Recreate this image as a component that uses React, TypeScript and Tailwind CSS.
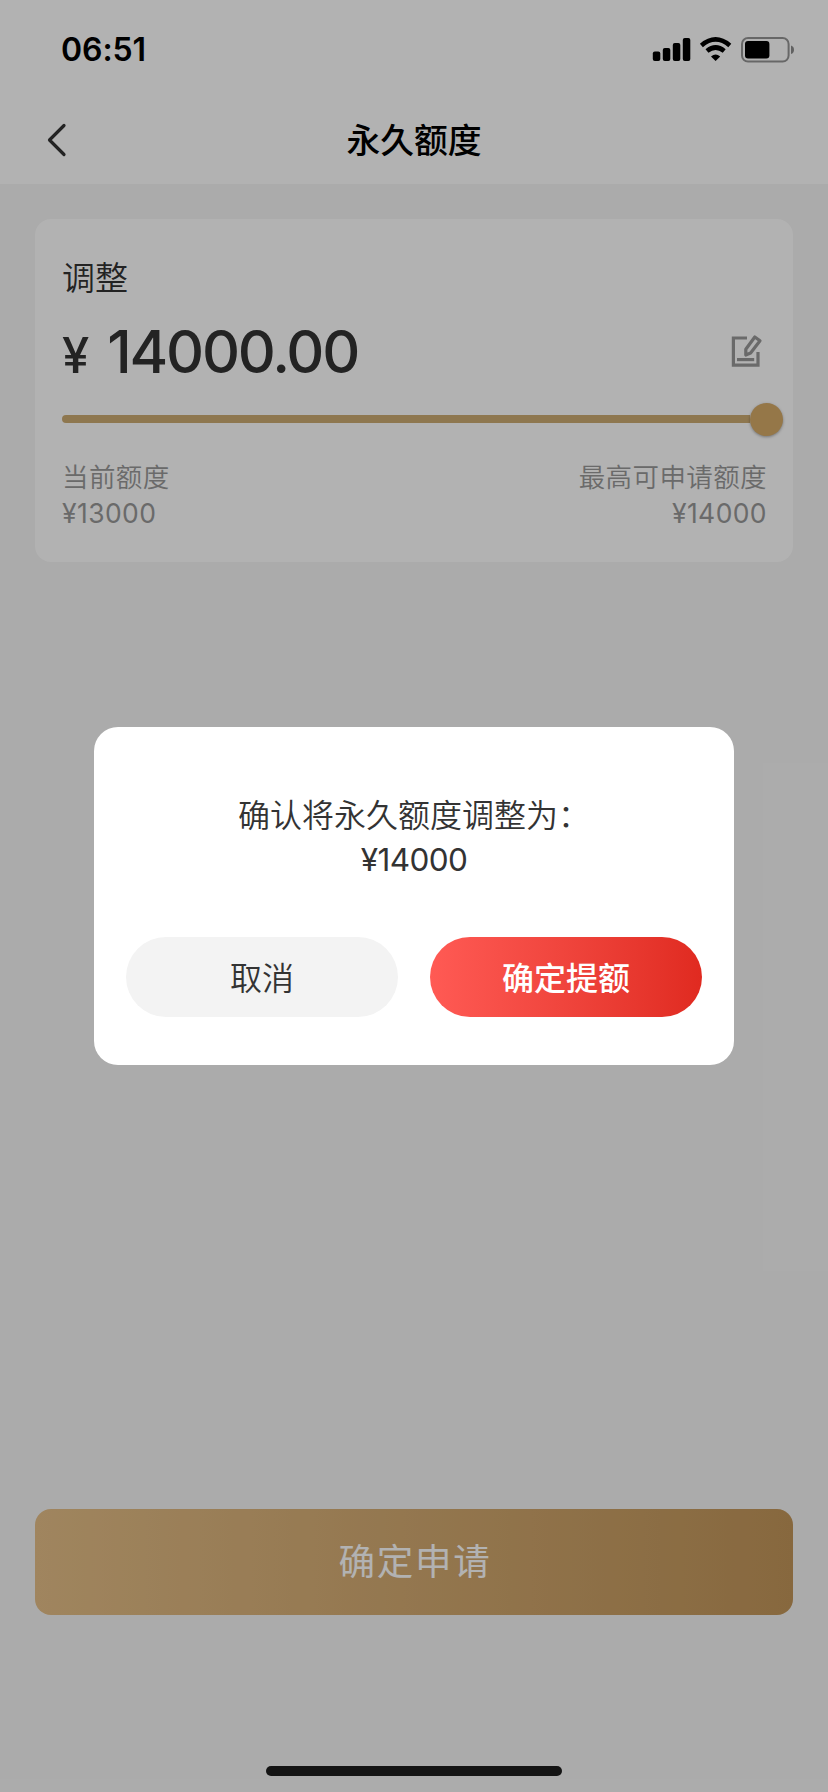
import type { ReactNode } from "react";

function StatusBar() {
  return (
    <div className="flex h-[100px] items-center justify-between pl-[61px] pr-[34px]">
      <span className="text-[32px] font-semibold leading-none tracking-[-0.1px] text-black">06:51</span>
      <svg width="144" height="28" viewBox="0 0 144 28" fill="none">
        <g fill="#000">
          <rect x="2.8" y="15.5" width="7.5" height="9.5" rx="2" />
          <rect x="12.8" y="12" width="7.5" height="13" rx="2" />
          <rect x="22.8" y="7" width="7.5" height="18" rx="2" />
          <rect x="32.8" y="2" width="7.5" height="23" rx="2" />
          <path d="M65.6 25 L61 20.6 Q65.6 16.2 70.2 20.6 Z" />
        </g>
        <path d="M51.4 9.4 Q65.6 -2.6 79.8 9.4" stroke="#000" strokeWidth="4.6" />
        <path d="M57 15.1 Q65.6 7.9 74.2 15.1" stroke="#000" strokeWidth="4.6" />
        <rect x="92" y="2" width="46.6" height="23.6" rx="6" stroke="#000" strokeOpacity="0.42" strokeWidth="2" />
        <rect x="95" y="5" width="24.4" height="17.4" rx="3" fill="#000" />
        <path d="M141 9.5 Q144 10.5 144 13.7 Q144 17 141 18 Z" fill="#000" fillOpacity="0.45" />
      </svg>
    </div>
  );
}

function NavBar() {
  return (
    <div className="grid h-[84px] grid-cols-[1fr_auto_1fr] items-center pb-[4px]">
      <svg className="ml-[44px]" width="26" height="38" viewBox="0 0 26 38" fill="none">
        <path d="M20 4.5 L5.5 19 L20 33.5" stroke="#333" strokeWidth="3.2" strokeLinecap="round" strokeLinejoin="round" />
      </svg>
      <h1 className="pt-[2px] text-[33.8px] font-medium leading-none text-black">永久额度</h1>
      <span />
    </div>
  );
}

function LimitCard() {
  return (
    <section className="mx-[35px] mt-[35px] flex h-[343px] flex-col rounded-[16px] bg-white px-[27px] pt-[39px] text-[#333]">
      <h2 className="text-[33px] font-[350] leading-[40px]">调整</h2>
      <div className="mt-[17px] flex h-[72px] items-center justify-between">
        <div className="flex items-baseline pt-px font-medium leading-none">
          <span className="text-[49px]">¥</span>
          <span className="ml-[18px] text-[59px] tracking-[-2.2px]">14000.00</span>
        </div>
        <svg className="mr-[3px]" width="34" height="34" viewBox="0 0 34 34" fill="none" stroke="#999" strokeWidth="3.2">
          <path d="M18 4 H4.4 V31.2 H29 V18" />
          <path d="M8 25.6 H25.2" />
          <path d="M25.8 3 L31 6.8 L21.6 19 L16.8 21 L16.8 15.2 Z" strokeLinejoin="round" />
        </svg>
      </div>
      <div className="-mr-[17px] mt-[15px] flex h-[34px] items-center">
        <div className="h-2 grow rounded-l-full bg-[#ccab72]" />
        <div className="size-[33px] rounded-full bg-[#d6ab68] shadow-[0_1px_3px_rgba(0,0,0,0.35)]" />
      </div>
      <div className="-mr-px mt-[23px] flex justify-between text-[26.5px] leading-[36px] tracking-[0.4px] text-[#999]">
        <div>
          <p className="font-[350]">当前额度</p>
          <p>¥13000</p>
        </div>
        <div className="text-right">
          <p className="font-[350]">最高可申请额度</p>
          <p>¥14000</p>
        </div>
      </div>
    </section>
  );
}

function DialogButton({ className, children }: { className: string; children: ReactNode }) {
  return (
    <button className={`flex h-20 flex-1 items-center justify-center rounded-full pt-[3px] text-[32px] leading-none ${className}`}>
      {children}
    </button>
  );
}

function ConfirmDialog() {
  return (
    <div className="absolute inset-0 flex items-center justify-center bg-black/30">
      <div className="flex h-[338px] w-[640px] flex-col rounded-[24px] bg-white px-8 pt-[67px] text-[#333]">
        <div className="text-center leading-[44px]">
          <p className="text-[32px] font-[350]">确认将永久额度调整为：</p>
          <p className="text-[31.5px] tracking-[-0.6px]">¥14000</p>
        </div>
        <div className="mt-[55px] flex gap-8">
          <DialogButton className="bg-[#f3f3f3] font-[350]">取消</DialogButton>
          <DialogButton className="bg-linear-to-r from-[#ff5a54] to-[#e02a20] font-medium text-white">确定提额</DialogButton>
        </div>
      </div>
    </div>
  );
}

export default function App() {
  return (
    <div className="relative flex h-[1792px] w-[828px] flex-col bg-[#f5f5f5] font-['Inter','Noto_Sans_CJK_SC',sans-serif]">
      <header className="bg-white">
        <StatusBar />
        <NavBar />
      </header>
      <LimitCard />
      <button className="mx-[35px] mt-auto flex h-[106px] items-center justify-center rounded-[16px] bg-linear-to-r from-[#e5bf88] to-[#c2965a] pl-[2px] text-[36.5px] leading-none tracking-[1.8px] text-white">
        确定申请
      </button>
      <div className="mx-auto mb-4 mt-[151px] h-[10px] w-[296px] rounded-full bg-[#1d1d1d]" />
      <ConfirmDialog />
    </div>
  );
}
